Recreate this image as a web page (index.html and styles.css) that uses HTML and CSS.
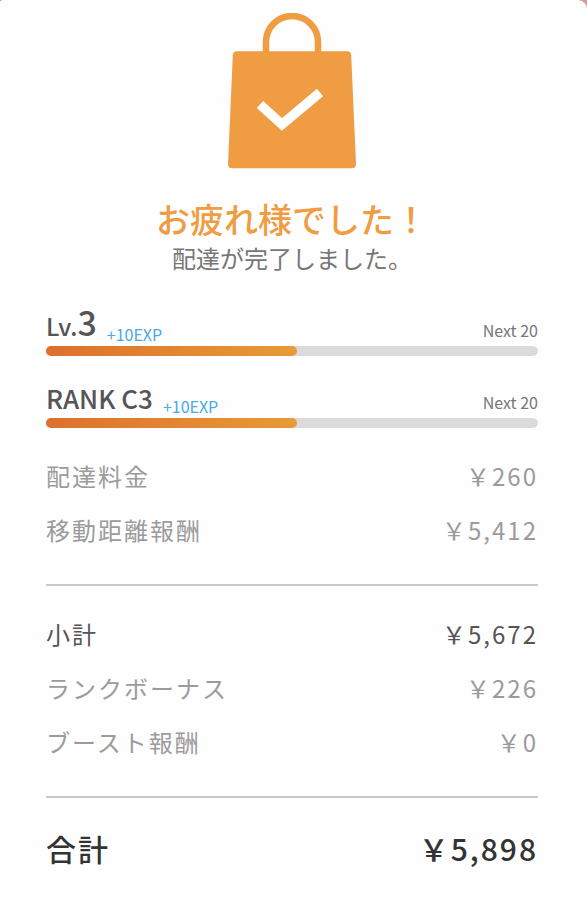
FILE: index.html
```html
<!DOCTYPE html>
<html lang="ja">
<head>
<meta charset="utf-8">
<meta name="viewport" content="width=device-width, initial-scale=1">
<title>配達完了</title>
<link rel="stylesheet" href="styles.css">
</head>
<body>
<main class="card">
  <header class="hero">
    <svg class="bag" viewBox="0 0 128 156" aria-hidden="true">
      <path d="M38 42V29a26 26 0 0 1 52 0v13" fill="none" stroke="#f09c42" stroke-width="6.5"/>
      <path d="M9 38.300H119q4 0 4.200 4L128 151q0 4.300-4.300 4.300H4.300Q0 155.300 0 151L4.800 42.300q.2-4 4.200-4Z" fill="#f09c42"/>
      <path d="M32 91.500 54 111.500 92 79.500" fill="none" stroke="#fff" stroke-width="9.500"/>
    </svg>
    <h1 class="title">お疲れ様でした！</h1>
    <p class="subtitle">配達が完了しました。</p>
  </header>

  <section class="progress">
    <div class="progress-head">
      <h2 class="level">Lv.<span class="level-number">3</span></h2>
      <span class="exp">+10EXP</span>
      <span class="next">Next 20</span>
    </div>
    <div class="track"><div class="fill"></div></div>
  </section>

  <section class="progress">
    <div class="progress-head">
      <h2 class="rank">RANK C3</h2>
      <span class="exp">+10EXP</span>
      <span class="next">Next 20</span>
    </div>
    <div class="track"><div class="fill"></div></div>
  </section>

  <dl class="rows">
    <div class="row"><dt>配達料金</dt><dd>￥260</dd></div>
    <div class="row"><dt>移動距離報酬</dt><dd>￥5,412</dd></div>
  </dl>
  <dl class="rows ruled">
    <div class="row subtotal"><dt>小計</dt><dd>￥5,672</dd></div>
    <div class="row"><dt>ランクボーナス</dt><dd>￥226</dd></div>
    <div class="row"><dt>ブースト報酬</dt><dd>￥0</dd></div>
  </dl>
  <dl class="rows ruled">
    <div class="row total"><dt>合計</dt><dd>￥5,898</dd></div>
  </dl>
</main>
</body>
</html>
```
FILE: styles.css
```css
* {
  box-sizing: border-box;
}

body {
  margin: 0;
  background: linear-gradient(90deg, #aaa, #d99a9e);
  font-family: "Noto Sans CJK JP", "Noto Sans", sans-serif;
  color: #777;
}

h1, h2, p, dl, dd {
  margin: 0;
}

.card {
  min-height: 100vh;
  padding: 13px 49px 0 46px;
  background: #fefefe;
  border-radius: 3px 9px 0 0;
}

.hero {
  display: flex;
  flex-direction: column;
  align-items: center;
  margin-bottom: 23px;
  text-align: center;
}

.bag {
  width: 128px;
  height: 156px;
  margin-bottom: 28px;
}

.title {
  font-size: 34px;
  font-weight: 500;
  line-height: 44px;
  color: #f09c42;
}

.subtitle {
  font-size: 24px;
  line-height: 34px;
}

.progress + .progress {
  margin-top: 14px;
}

.progress-head {
  display: flex;
  align-items: flex-end;
  height: 48px;
}

.level,
.rank {
  margin-right: 10px;
  font-size: 26px;
  font-weight: 500;
  line-height: 40px;
  color: #555;
}

.level {
  font-size: 24px;
}

.level-number {
  font-size: 34px;
}

.exp,
.next {
  font-size: 16px;
  line-height: 24px;
}

.exp {
  color: #4aa9e6;
}

.next {
  margin-left: auto;
  padding-bottom: 4px;
}

.track {
  height: 10px;
  border-radius: 5px;
  background: #dbdbdb;
}

.fill {
  width: 51%;
  height: 10px;
  border-radius: 5px;
  background: linear-gradient(90deg, #dd702e, #e79b36);
}

.rows {
  padding: 21px 0 27px;
}

.ruled {
  border-top: 2px solid #c8c8c8;
}

.row {
  display: flex;
  justify-content: space-between;
  font-size: 24px;
  line-height: 54px;
  letter-spacing: 2px;
  color: #9b9b9b;
}

.subtotal {
  color: #555;
}

.total {
  font-size: 30px;
  font-weight: 500;
  line-height: 58px;
  color: #333;
}
```
